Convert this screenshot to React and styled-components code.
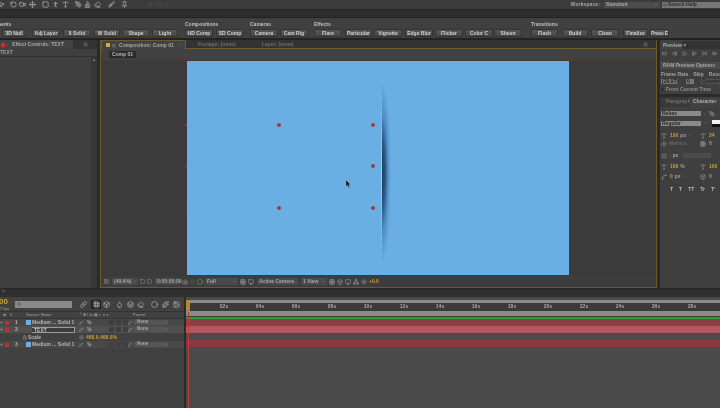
import React from "react";
import styled, { createGlobalStyle } from "styled-components";
import { MousePointer2, RotateCcw, Video, Move, Square, PenTool, Type, Brush, Stamp, Eraser, PersonStanding, Pin, SkipBack, StepBack, Play, StepForward, SkipForward, Volume2, Camera, Search, Box, Layers, Circle, Sun, Network, Grid3x3, Monitor, Image, Timer, ChevronDown, Lock, Spline, Sparkles, Droplet, Eye, Link, Menu, AlignJustify } from "lucide-react";

const Global = createGlobalStyle`
  html, body { margin: 0; padding: 0; background: #3f3f3f; overflow: hidden; }
  * { box-sizing: border-box; }
`;
const Frame = styled.div`
  width: 720px; height: 408px; overflow: hidden; display: flex; flex-direction: column;
  background: #2b2b2b; color: #b8b8b8; font: 700 5px/1 "Liberation Sans", Arial, sans-serif; filter: blur(0.45px);
`;
const TopBar = styled.div`
  height: 10px; background: #3c3c3c; display: flex; align-items: center; border-bottom: 1px solid #252525; flex: none;
  & > :first-child { margin-left: -3px; }
`;
const Tool = styled.span`
  display: flex; width: 8px; justify-content: center; margin-right: ${p => p.$mr ?? 2}px; margin-left: ${p => p.$ml || 0}px; color: ${p => p.$c || "#c4c4c4"};
`;
const Spacer = styled.div`flex: 1;`;
const WsLabel = styled.span`color: #a8a8a8; margin-right: 4px; letter-spacing: .1px;`;
const WsSelect = styled.div`
  width: 56px; height: 6px; background: #4c4c4c; color: #a8a8a8; display: flex; align-items: center; justify-content: space-between; padding: 0 2px; margin-right: 2px;
`;
const SearchHelp = styled.div`
  width: 58px; height: 6px; background: #767676; color: #2c2c2c; display: flex; align-items: center; gap: 1px; padding-left: 1px;
`;
const Band = styled.div`height: 8px; background: #2d2d2d; border-bottom: 1px solid #222; flex: none;`;
const Presets = styled.div`
  height: 22px; background: #404040; display: flex; flex: none; border-bottom: 2px solid #232323;
`;
const Group = styled.div`
  margin-left: ${p => p.$ml}px; display: flex; flex-direction: column; flex: none;
`;
const GroupLabel = styled.div`
  height: 11px; padding-top: 4px; color: #c0c0c0; white-space: nowrap; font-size: 5px; margin-left: ${p => p.$off || 0}px;
`;
const BtnRow = styled.div`display: flex;`;
const PresetBtn = styled.div`
  width: ${p => p.$w}px; height: 8px; margin-left: ${p => p.$ml || 0}px; flex: none; background: linear-gradient(#565656, #484848);
  border: 1px solid #333; border-radius: 1px; color: #cfcfcf; display: flex; align-items: center; justify-content: center; white-space: nowrap; overflow: hidden; letter-spacing: ${p => p.$ls || 0}px;
`;
const Main = styled.div`display: flex; height: 248px; flex: none; background: #2a2a2a;`;
const EffectPanel = styled.div`width: 97px; display: flex; flex-direction: column; background: #3f3f3f; flex: none;`;
const Tabs = styled.div`
  height: 9px; background: #333; display: flex; align-items: stretch; flex: none; position: relative;
`;
const Tab = styled.div`
  display: flex; align-items: center; gap: 2px; padding: 0 ${p => p.$pr ?? 4}px 0 ${p => p.$pl ?? 1}px; width: ${p => p.$w}px; flex: none; white-space: nowrap;
  background: ${p => p.$on ? "#424242" : "transparent"}; color: ${p => p.$on ? "#a8a8a8" : "#6e6e6e"};
  ${p => p.$gold ? "border: 1px solid #6d5a2c; border-bottom: 0;" : ""}
  ${p => p.$line ? "border-bottom: 1px solid #6d5a2c;" : ""}
`;
const TabMenu = styled.div`width: 24px; flex: none; display: flex; align-items: center; justify-content: center; color: #a0a0a0;`;
const Dot = styled.span`width: ${p => p.$s || 4}px; height: ${p => p.$s || 4}px; background: ${p => p.$c}; flex: none; display: block;`;
const LayerName = styled.div`height: 8px; border-bottom: 1px solid #303030; padding: 1px 0 0; color: #9c9c9c; flex: none;`;
const ScrollWrap = styled.div`flex: 1; display: flex; justify-content: flex-end;`;
const Scroll = styled.div`width: 6px; background: #363636; display: flex; justify-content: center; color: #888; font-size: 4px; padding-top: 1px;`;
const CompPanel = styled.div`
  margin-left: 3px; width: 557px; flex: none; display: flex; flex-direction: column; background: #3c3c3c; border: 1px solid #6d5a2c; border-top: 0;
`;
const TabFill = styled.div`flex: 1; border-bottom: 1px solid #6d5a2c; display: flex; justify-content: flex-end; align-items: center; padding-right: 8px; color: #999;`;
const CompBar = styled.div`height: 12px; flex: none; background: #414141; border-bottom: 1px solid #4a3a33; padding: 2px 0 0 8px;`;
const CompPill = styled.div`width: 27px; height: 7px; background: #2c2c2c; color: #b5b5b5; display: flex; align-items: center; justify-content: center;`;
const Stage = styled.div`flex: 1; position: relative; display: flex; justify-content: center; background: #3b3b3b;`;
const Blue = styled.div`width: 382px; height: 214px; margin-right: 2px; background: #6aafe3; position: relative; overflow: hidden;`;
const Handle = styled.i`
  position: absolute; left: ${p => p.$x}px; top: ${p => p.$y}px; width: 4px; height: 4px; border-radius: 50%; background: #a5393a;
`;
const OutHandle = styled.i`
  position: absolute; left: 84px; top: ${p => p.$y}px; width: 2px; height: 2px; background: #8c3030;
`;
const Shadow = styled.div`
  position: absolute; left: 195px; top: 20px; width: 9px; height: 184px;
  background: radial-gradient(ellipse 100% 50% at 0 50%, #1c3c5c 0%, #2a5580 35%, rgba(70,130,185,.7) 65%, rgba(106,175,227,0) 100%);
`;
const Shine = styled.div`
  position: absolute; left: 194px; top: 30px; width: 1px; height: 165px; background: linear-gradient(rgba(150,205,245,0), #9cd2f6 50%, rgba(150,205,245,0));
`;
const Cursor = styled.svg`position: absolute; left: 158px; top: 119px;`;
const StageFooter = styled.div`
  height: 11px; flex: none; background: #3d3d3d; display: flex; align-items: center; padding-left: 3px; color: #a5a5a5; gap: 2px;
`;
const FooterSelect = styled.div`
  width: ${p => p.$w}px; height: 7px; margin-left: ${p => p.$ml || 0}px; background: #4a4a4a; display: flex; align-items: center; justify-content: space-between; padding: 0 2px; flex: none; white-space: nowrap;
`;
const Gold = styled.span`color: #c9a02f; margin-left: ${p => p.$ml || 0}px; white-space: nowrap;`;
const RightPanel = styled.div`margin-left: 3px; flex: 1; display: flex; flex-direction: column; background: #3f3f3f; overflow: hidden;`;
const PreviewBox = styled.div`height: 57px; flex: none; padding: 1px 0 0 0; border-bottom: 3px solid #2a2a2a;`;
const PreviewTabs = styled(Tabs)`height: 8px;`;
const Transport = styled.div`display: flex; gap: 5px; color: #c0c0c0; height: 9px; align-items: center; padding-left: 2px;`;
const RamBtn = styled.div`height: 7px; width: 70px; margin-top: 4px; background: #4b4b4b; padding: 1px 3px; color: #a8a8a8; white-space: nowrap;`;
const Line = styled.div`
  display: flex; align-items: center; gap: ${p => p.$gap ?? 2}px; height: ${p => p.$h || 7}px; margin-top: ${p => p.$mt || 0}px; padding-left: ${p => p.$pl ?? 1}px; white-space: nowrap; color: ${p => p.$c || "#a0a0a0"};
`;
const MiniSelect = styled.div`
  width: ${p => p.$w}px; height: ${p => p.$h || 5}px; margin-left: ${p => p.$ml || 0}px; background: ${p => p.$bg || "#8a8a8a"}; color: #252525; padding: 0 1px; flex: none; white-space: nowrap; overflow: hidden; display: flex; align-items: center;
`;
const Check = styled.span`width: 3px; height: 3px; background: #2f2f2f; flex: none;`;
const Swatch = styled.div`width: 8px; height: 7px; background: linear-gradient(#f2f2f2 50%, #111 50%); flex: none; margin-left: 3px;`;
const CharTabs = styled.div`height: 10px; display: flex; flex: none; background: #333; margin-bottom: 3px;`;
const CharTab = styled.div`
  padding: 2px 3px 0 ${p => p.$pl || 6}px; background: ${p => p.$on ? "#424242" : "#393939"}; color: ${p => p.$on ? "#b0b0b0" : "#6f6f6f"}; width: ${p => p.$w}px; white-space: nowrap; overflow: hidden; flex: none;
`;
const Side = styled.span`
  width: 20px; flex: none; display: flex; align-items: center; gap: 3px; color: #a0a0a0; margin-left: auto;
`;
const Timeline = styled.div`flex: 1; display: flex; flex-direction: column; background: #404040;`;
const TlBand = styled.div`height: 9px; flex: none; background: #2f2f2f; border-top: 1px solid #262626; padding-left: 2px; color: #666;`;
const TlBody = styled.div`flex: 1; display: flex; position: relative;`;
const TlLeft = styled.div`width: 184px; flex: none; display: flex; flex-direction: column; background: #414141;`;
const TlDivider = styled.div`width: 2px; background: #2b2b2b; flex: none;`;
const TlRight = styled.div`flex: 1; display: flex; flex-direction: column; background: #4a4a4a; overflow: hidden;`;
const SearchRow = styled.div`height: 15px; flex: none; display: flex; align-items: center; position: relative; padding-left: 15px; border-bottom: 1px solid #333;`;
const Code = styled.div`
  position: absolute; left: -1px; top: 1px; color: #c9a02f; font-size: 8px; line-height: 8px; 
`;
const Fps = styled.div`position: absolute; left: 0; top: 10px; color: #a58835; font-size: 4px;`;
const SearchBox = styled.div`width: 57px; height: 7px; background: #8a8a8a; color: #333; margin-right: 6px; display: flex; align-items: center; padding-left: 2px; flex: none;`;
const TlIcon = styled.span`
  display: flex; align-items: center; justify-content: center; width: 10px; height: 9px; margin-right: ${p => p.$mr ?? 0}px; color: #c2c2c2; background: ${p => p.$on ? "#222" : "transparent"}; flex: none;
`;
const HeadRow = styled.div`
  height: 7px; flex: none; display: flex; align-items: center; color: #8b8b8b; font-size: 4px; border-bottom: 1px solid #333; white-space: nowrap;
`;
const Row = styled.div`
  height: ${p => p.$h || 7}px; flex: none; display: flex; align-items: center; white-space: nowrap; background: ${p => p.$bg || "#484848"}; color: #b5b5b5;
`;
const Cell = styled.span`
  width: ${p => p.$w}px; flex: none; display: flex; align-items: center; gap: 1px; overflow: hidden; padding-left: ${p => p.$pl || 0}px;
`;
const SwitchBox = styled.span`width: 5px; height: 5px; background: #3f3f3f; flex: none; margin-right: ${p => p.$mr ?? 0}px;`;
const NameInput = styled.div`width: 44px; height: 6px; border: 1px solid #9a9a9a; background: #3b3b3b; color: #b8b8b8; padding-left: 2px; line-height: 4px; margin-left: -1px;`;
const ParentSel = styled.div`width: 34px; height: 5px; background: #555; color: #a5a5a5; display: flex; justify-content: space-between; align-items: center; padding: 0 1px 0 3px; font-size: 4.5px;`;
const Slider = styled.div`height: 3px; margin-top: 3px; background: #8a8a8a; flex: none;`;
const Ruler = styled.div`height: 8px; background: #3a3a3a; display: flex; padding-left: 20px; flex: none;`;
const Tick = styled.div`width: 36px; flex: none; text-align: center; color: #a9a9a9; font-size: 5px; padding-top: 1px;`;
const WorkArea = styled.div`height: 5px; background: #8b8b8b; flex: none;`;
const Green = styled.div`height: 3px; background: #3a3a3a; flex: none; display: flex; align-items: flex-end;`;
const GreenLine = styled.div`height: 2px; width: 100%; background: #2f9c35;`;
const Bar = styled.div`height: 7px; background: ${p => p.$c}; flex: none;`;
const PlayLine = styled.div`position: absolute; left: 188px; top: 15px; bottom: 0; width: 1px; background: #c23a3a;`;
const PlayHead = styled.div`position: absolute; left: 186px; top: 3px; width: 4px; height: 11px; background: #b08a2c; border-radius: 1px;`;

const Ic = ({ as: I, s = 7, ...r }) => <I size={s} strokeWidth={2} {...r} />;

const tools = [MousePointer2, RotateCcw, Video, Move, Square, PersonStanding, Type, PenTool, Stamp, Eraser, Brush, Pin];
const mrs = [4, 1, 2, 5, 2, 2, 5, 1, 2, 6, 5, 0];
const ticks = ["02s", "04s", "06s", "08s", "10s", "12s", "14s", "16s", "18s", "20s", "22s", "24s", "26s", "28s"];

const LayerRow = ({ n, name, bg, children }) => (
  <Row $bg={bg}>
    <Cell $w={5}><Eye size={3} /></Cell>
    <Cell $w={10}><Dot $s={4} $c="#b8332f" /></Cell>
    <Cell $w={11}>{n}</Cell>
    <Cell $w={6}>{children ? null : <Dot $s={5} $c="#6aafe3" />}</Cell>
    <Cell $w={47}>{children || name}</Cell>
    <Cell $w={8}><Spline size={4} /></Cell>
    <Cell $w={7}><Ic as={PenTool} s={5} /></Cell>
    <Cell $w={15} />
    <Cell $w={19}><SwitchBox $mr={1} /><SwitchBox $mr={1} /><SwitchBox /></Cell>
    <Cell $w={6}><Ic as={Spline} s={4} /></Cell>
    <ParentSel>None<ChevronDown size={3} /></ParentSel>
  </Row>
);

export default function App() {
  return (
    <Frame>
      <Global />
      <TopBar>
        {tools.map((I, i) => <Tool key={i} $mr={mrs[i]}><Ic as={I} /></Tool>)}
        <Tool $c="#5a5a5a" $mr={1} $ml={18}><Ic as={Move} s={5} /></Tool>
        <Tool $c="#5a5a5a" $mr={0}><Ic as={Square} s={4} /></Tool>
        <Tool $c="#5a5a5a" $mr={0}><Ic as={Square} s={4} /></Tool>
        <Spacer />
        <WsLabel>Workspace:</WsLabel>
        <WsSelect>Standard<ChevronDown size={4} /></WsSelect>
        <SearchHelp><Search size={4} />Search Help</SearchHelp>
      </TopBar>
      <Band />
      <Presets>
        <Group $ml={0}>
          <GroupLabel $off={-11}>Elements</GroupLabel>
          <BtnRow>
            <PresetBtn $ml={2} $w={24}>3D Null</PresetBtn>
            <PresetBtn $ml={6} $w={28}>Adj Layer</PresetBtn>
            <PresetBtn $ml={3} $w={28}>8 Solid</PresetBtn>
            <PresetBtn $ml={3} $w={26}>W Solid</PresetBtn>
            <PresetBtn $ml={2} $w={28}>Shape</PresetBtn>
            <PresetBtn $ml={2} $w={26}>Light</PresetBtn>
          </BtnRow>
        </Group>
        <Group $ml={7}>
          <GroupLabel>Compositions</GroupLabel>
          <BtnRow>
            <PresetBtn $w={28}>HD Comp</PresetBtn>
            <PresetBtn $ml={3} $w={28}>SD Comp</PresetBtn>
          </BtnRow>
        </Group>
        <Group $ml={6}>
          <GroupLabel>Cameras</GroupLabel>
          <BtnRow>
            <PresetBtn $w={28}>Camera</PresetBtn>
            <PresetBtn $ml={2} $w={28}>Cam Rig</PresetBtn>
          </BtnRow>
        </Group>
        <Group $ml={6}>
          <GroupLabel>Effects</GroupLabel>
          <BtnRow>
            <PresetBtn $w={28}>Flare</PresetBtn>
            <PresetBtn $ml={3} $w={27}>Particular</PresetBtn>
            <PresetBtn $ml={2} $w={28}>Vignette</PresetBtn>
            <PresetBtn $ml={3} $w={28}>Edge Blur</PresetBtn>
            <PresetBtn $ml={2} $w={28}>Flicker</PresetBtn>
            <PresetBtn $ml={2} $w={28}>Color C</PresetBtn>
            <PresetBtn $ml={1} $w={28}>Sheen</PresetBtn>
          </BtnRow>
        </Group>
        <Group $ml={9}>
          <GroupLabel>Transitions</GroupLabel>
          <BtnRow>
            <PresetBtn $w={27}>Flash</PresetBtn>
            <PresetBtn $ml={4} $w={26}>Build</PresetBtn>
            <PresetBtn $ml={3} $w={28}>Clean</PresetBtn>
            <PresetBtn $ml={4} $w={25}>Finalize</PresetBtn>
            <PresetBtn $ml={2} $w={19} $ls={-0.2}>Press E</PresetBtn>
          </BtnRow>
        </Group>
      </Presets>
      <Main>
        <EffectPanel>
          <Tabs>
            <Tab $on $w={73} $pl={1}>
              <Dot $s={4} $c="#c9302c" />
              <Ic as={Lock} s={5} />
              <span style={{ marginLeft: 2 }}>Effect Controls: TEXT</span>
              <Spacer />
              <ChevronDown size={4} />
            </Tab>
            <TabMenu><Menu size={5} /></TabMenu>
          </Tabs>
          <LayerName>TEXT</LayerName>
          <ScrollWrap><Scroll>▲</Scroll></ScrollWrap>
        </EffectPanel>
        <CompPanel>
          <Tabs>
            <Tab $on $gold $w={85} $pl={4}>
              <Dot $s={4} $c="#c9a85a" />
              <Ic as={Lock} s={5} />
              <span style={{ marginLeft: 1 }}>Composition: Comp 01</span>
              <Spacer />
              <ChevronDown size={4} />
            </Tab>
            <Tab $line $w={64} $pl={12}>Footage: (none)</Tab>
            <Tab $line $w={64} $pl={12}>Layer: (none)</Tab>
            <TabFill><Menu size={5} /></TabFill>
          </Tabs>
          <CompBar><CompPill>Comp 01</CompPill></CompBar>
          <Stage>
            <Blue>
              <Handle $x={90} $y={62} />
              <Handle $x={184} $y={62} />
              <Handle $x={184} $y={103} />
              <Handle $x={184} $y={145} />
              <Handle $x={90} $y={145} />
              <Shine />
              <Shadow />
              <Cursor width="6" height="8" viewBox="0 0 6 8"><path d="M1 0 L1 6.5 L2.4 5.2 L3.6 7.6 L4.6 7 L3.5 4.8 L5.4 4.6 Z" fill="#111" stroke="#9ab" strokeWidth=".4" /></Cursor>
            </Blue>
            <OutHandle $y={63} />
            <OutHandle $y={104} />
            <OutHandle $y={146} />
          </Stage>
          <StageFooter>
            <Ic as={Image} s={5} />
            <FooterSelect $ml={1} $w={26}>(49.6%)<ChevronDown size={3} /></FooterSelect>
            <Ic as={Square} s={5} />
            <Ic as={Square} s={5} />
            <FooterSelect $ml={1} $w={25}>0:00:00:00</FooterSelect>
            <Ic as={Camera} s={6} />
            <Ic as={Lock} s={5} color="#666" />
            <Ic as={Circle} s={6} color="#7fae6a" />
            <FooterSelect $w={33}>Full<ChevronDown size={3} /></FooterSelect>
            <Ic as={Grid3x3} s={6} />
            <Ic as={Monitor} s={6} />
            <FooterSelect $ml={1} $w={41}>Active Camera<ChevronDown size={3} /></FooterSelect>
            <FooterSelect $ml={1} $w={26}>1 View<ChevronDown size={3} /></FooterSelect>
            <Ic as={Grid3x3} s={6} />
            <Ic as={Box} s={6} />
            <Ic as={Monitor} s={6} />
            <Ic as={Network} s={6} />
            <Ic as={Sun} s={6} />
            <Gold>+0.0</Gold>
          </StageFooter>
        </CompPanel>
        <RightPanel>
          <PreviewBox>
            <PreviewTabs>
              <Tab $on $w={22} $pl={3} $pr={0}>Preview ×</Tab>
            </PreviewTabs>
            <Transport>
              <Ic as={SkipBack} s={5} /><Ic as={StepBack} s={5} /><Ic as={Play} s={5} /><Ic as={StepForward} s={5} /><Ic as={SkipForward} s={5} /><Ic as={Volume2} s={5} />
            </Transport>
            <RamBtn>RAM Preview Options</RamBtn>
            <Line $mt={2} $gap={5}>Frame Rate<span>Skip</span><span>Resolution</span></Line>
            <Line $gap={2}><MiniSelect $w={17} $bg="#777">(29.97)</MiniSelect><ChevronDown size={3} /><MiniSelect $ml={4} $w={8} $bg="#777">0</MiniSelect><MiniSelect $w={20} $bg="#555" $ml={5}>Quarter</MiniSelect></Line>
            <Line $mt={1} $c="#8c8c8c"><Check />From Current Time</Line>
          </PreviewBox>
          <CharTabs>
            <CharTab $w={30}>Paragraph</CharTab>
            <CharTab $on $w={30} $pl={3}>Character</CharTab>
          </CharTabs>
          <Line $gap={2}><MiniSelect $w={40}>Bebas</MiniSelect><ChevronDown size={4} /><Ic as={PenTool} s={6} /></Line>
          <Line $mt={2} $gap={2} $h={8}><MiniSelect $w={40}>Regular</MiniSelect><ChevronDown size={4} /><Swatch /></Line>
          <Line $mt={5}><Type size={6} /><Gold $ml={1}>100</Gold> px<ChevronDown size={3} /><Side><Type size={6} /><Gold>24</Gold></Side></Line>
          <Line $mt={1} $c="#666"><Move size={6} color="#888" />Metrics<ChevronDown size={3} /><Side><Grid3x3 size={6} /><Gold>0</Gold></Side></Line>
          <Line $mt={5}><AlignJustify size={6} /><Gold>-</Gold> px<MiniSelect $w={28} $bg="#4c4c4c" $ml={2} /></Line>
          <Line $mt={4}><Type size={6} /><Gold $ml={1}>100</Gold> %<Side><Type size={6} /><Gold>100</Gold></Side></Line>
          <Line $mt={3}><Spline size={6} /><Gold $ml={1}>0</Gold> px<ChevronDown size={3} /><Side><Box size={6} /><Gold>0</Gold></Side></Line>
          <Line $mt={6} $pl={10} $gap={6} $c="#bdbdbd">T<span>T</span><span>TT</span><span>Tr</span><span>T¹</span></Line>
        </RightPanel>
      </Main>
      <Timeline>
        <TlBand>×</TlBand>
        <TlBody>
          <TlLeft>
            <SearchRow>
              <Code>00</Code>
              <Fps>7 fps</Fps>
              <SearchBox><Search size={4} /></SearchBox>
              <TlIcon $mr={3}><Ic as={Link} /></TlIcon>
              <TlIcon $on><Ic as={Grid3x3} /></TlIcon>
              <TlIcon $mr={3}><Ic as={Box} /></TlIcon>
              <TlIcon $mr={1}><Ic as={Droplet} /></TlIcon>
              <TlIcon><Ic as={Layers} /></TlIcon>
              <TlIcon $mr={4}><Ic as={Eraser} /></TlIcon>
              <TlIcon $mr={1}><Ic as={Circle} /></TlIcon>
              <TlIcon $mr={1}><Ic as={Sparkles} /></TlIcon>
              <TlIcon><Ic as={Image} /></TlIcon>
            </SearchRow>
            <HeadRow>
              <Cell $w={10} $pl={3}>◆</Cell>
              <Cell $w={16}>#</Cell>
              <Cell $w={53}>Source Name</Cell>
              <Cell $w={54}>⌃ ✱ \ fx ▣ ◐ ● ●</Cell>
              <Cell $w={40}>Parent</Cell>
            </HeadRow>
            <LayerRow n="1" name="Medium ... Solid 1" />
            <LayerRow n="2" bg="#505050"><NameInput>TEXT</NameInput></LayerRow>
            <Row $h={8} $bg="#414141">
              <Cell $w={22} />
              <Cell $w={6}><Timer size={5} /></Cell>
              <Cell $w={51}>Scale</Cell>
              <Cell $w={7}><AlignJustify size={5} /></Cell>
              <Gold>468.0,468.0%</Gold>
            </Row>
            <LayerRow n="3" name="Medium ... Solid 1" />
          </TlLeft>
          <TlDivider />
          <TlRight>
            <Slider />
            <Ruler>{ticks.map((t, i) => <Tick key={i}>{t}</Tick>)}</Ruler>
            <WorkArea />
            <Green><GreenLine /></Green>
            <Bar $c="#8a3f44" />
            <Bar $c="#b2585c" />
            <Bar $c="#4b4b4b" />
            <Bar $c="#873a40" />
          </TlRight>
          <PlayHead />
          <PlayLine />
        </TlBody>
      </Timeline>
    </Frame>
  );
}
